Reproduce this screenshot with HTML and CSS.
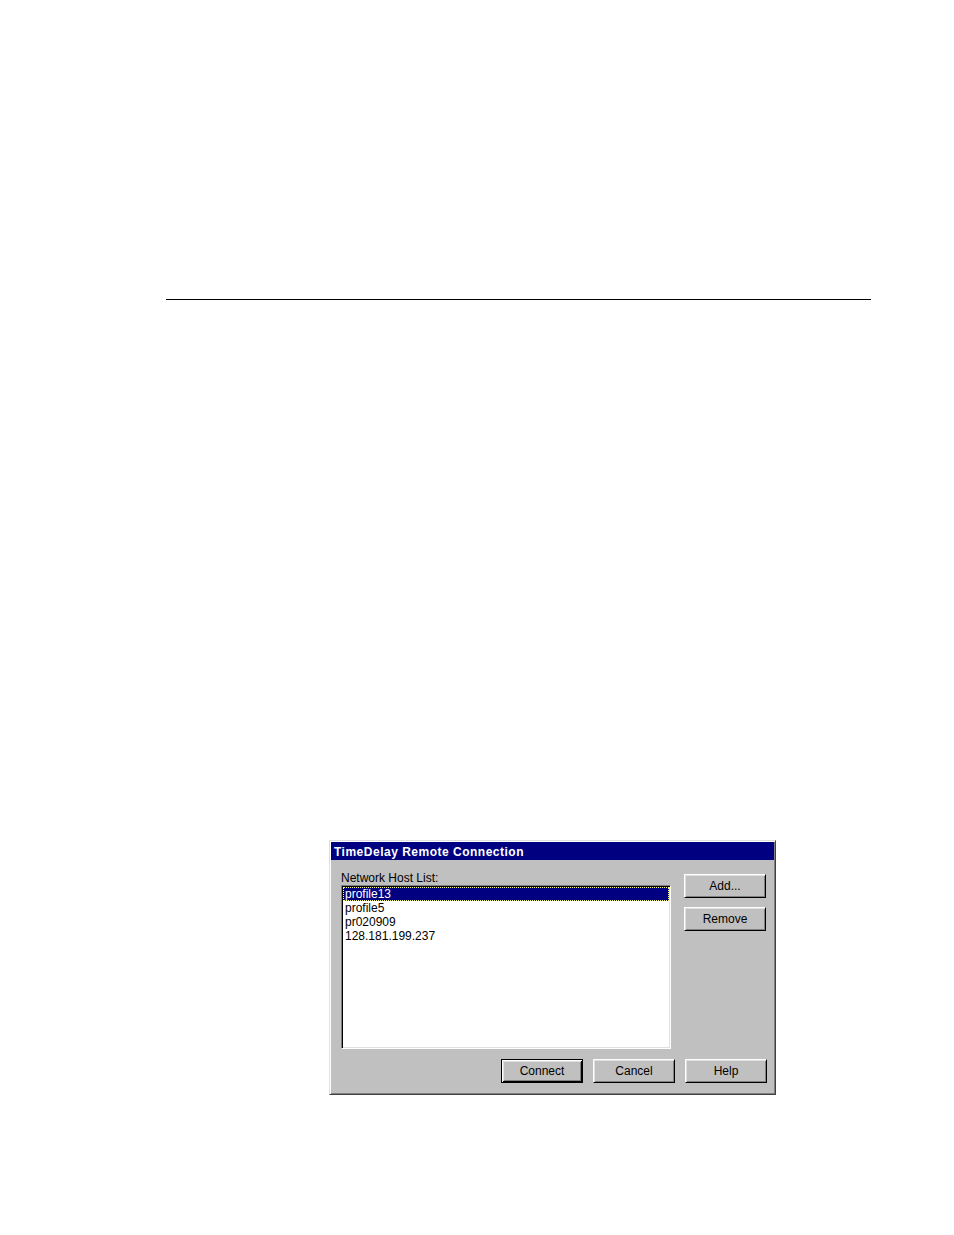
FILE: index.html
```html
<!DOCTYPE html>
<html>
<head>
<meta charset="utf-8">
<link rel="stylesheet" href="styles.css">
</head>
<body>
<div class="page">
  <div class="rule"></div>
  <div class="dialog">
    <div class="titlebar">TimeDelay Remote Connection</div>
    <div class="content">
      <div class="toprow">
        <div class="leftcol">
          <div class="label">Network Host List:</div>
          <div class="listbox">
            <div class="item selected"><span>profile13</span></div>
            <div class="item">profile5</div>
            <div class="item">pr020909</div>
            <div class="item">128.181.199.237</div>
          </div>
        </div>
        <div class="rightcol">
          <div class="btn add">Add...</div>
          <div class="btn remove">Remove</div>
        </div>
      </div>
      <div class="bottomrow">
        <div class="btn default">Connect</div>
        <div class="btn">Cancel</div>
        <div class="btn">Help</div>
      </div>
    </div>
  </div>
</div>
</body>
</html>
```

FILE: styles.css
```css
html, body {
  margin: 0;
  padding: 0;
  background: #ffffff;
}
.page {
  width: 954px;
  height: 1235px;
  padding-top: 299px;
  box-sizing: border-box;
  font-family: "Liberation Sans", Arial, sans-serif;
  font-size: 12px;
  color: #000;
}
.rule {
  margin-left: 166px;
  width: 705px;
  height: 0;
  border-top: 1.5px solid #000;
}
.dialog {
  margin-top: 540px;
  margin-left: 329px;
  width: 447px;
  height: 255px;
  box-sizing: border-box;
  background: #c0c0c0;
  border: 1px solid;
  border-color: #dfdfdf #404040 #404040 #dfdfdf;
  box-shadow: inset 1px 1px 0 #ffffff, inset -1px -1px 0 #808080;
  padding: 1px;
}
.titlebar {
  height: 17px;
  padding-top: 1px;
  background: #000080;
  color: #ffffff;
  font-weight: bold;
  font-size: 12px;
  line-height: 18px;
  padding-left: 3px;
  letter-spacing: 0.5px;
}
.content {
  padding-left: 10px;
  padding-right: 7px;
}
.toprow {
  display: flex;
}
.leftcol {
  width: 330px;
}
.label {
  margin-top: 11px;
  height: 14px;
  line-height: 14px;
}
.listbox {
  height: 164px;
  box-sizing: border-box;
  background: #ffffff;
  border: 1px solid;
  border-color: #808080 #ffffff #ffffff #808080;
  box-shadow: inset 1px 1px 0 #000000, inset -1px -1px 0 #dfdfdf;
  padding: 1px;
}
.item {
  height: 14px;
  line-height: 14px;
  padding-left: 2px;
  white-space: nowrap;
}
.item.selected {
  background: #000080;
  color: #ffffff;
  outline: 1px dotted #ffff80;
  outline-offset: -1px;
}
.rightcol {
  margin-left: 13px;
  display: flex;
  flex-direction: column;
}
.btn {
  width: 82px;
  height: 24px;
  box-sizing: border-box;
  background: #c0c0c0;
  border: 1px solid;
  border-color: #ffffff #000000 #000000 #ffffff;
  box-shadow: inset 1px 1px 0 #dfdfdf, inset -1px -1px 0 #808080;
  text-align: center;
  line-height: 23px;
}
.add {
  margin-top: 14px;
}
.remove {
  margin-top: 9px;
}
.bottomrow {
  margin-top: 10px;
  display: flex;
  justify-content: flex-end;
  gap: 10px;
}
.btn.default {
  border: 1px solid #000000;
  box-shadow: inset 1px 1px 0 #ffffff, inset -1px -1px 0 #000000, inset 2px 2px 0 #dfdfdf, inset -2px -2px 0 #808080;
}
```
